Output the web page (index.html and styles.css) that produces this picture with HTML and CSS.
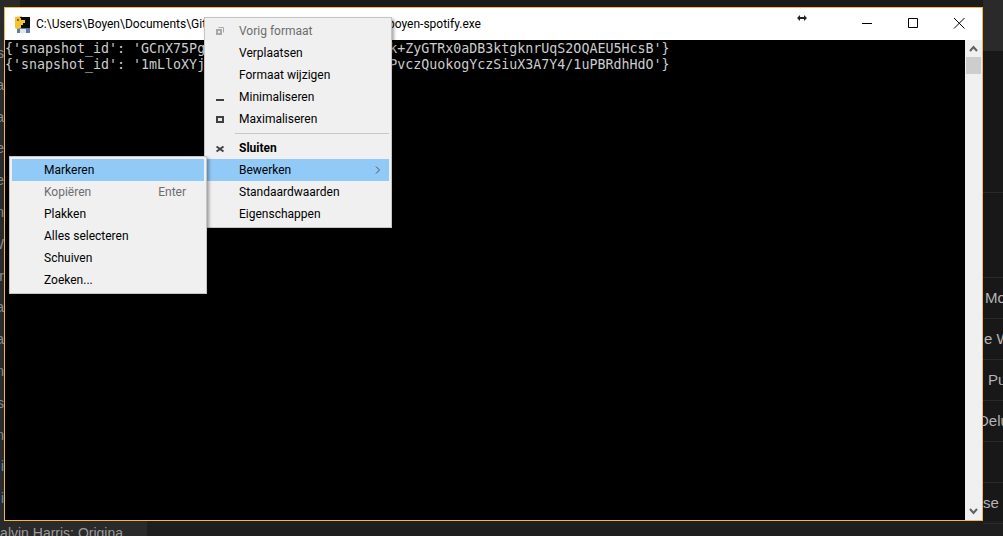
FILE: index.html
```html
<!DOCTYPE html>
<html lang="nl">
<head>
<meta charset="utf-8">
<title>boyen-spotify.exe</title>
<link rel="stylesheet" href="styles.css">
</head>
<body>
<div class="desktop">
  <div class="backdrop">
    <div class="left-list">
      <span class="cut">s</span>
      <span class="cut">a</span>
      <span class="cut">a</span>
      <span class="cut">e</span>
      <span class="cut">e</span>
      <span class="cut">n</span>
      <span class="cut">W</span>
      <span class="cut">r</span>
      <span class="cut">a</span>
      <span class="cut">a</span>
      <span class="cut">n</span>
      <span class="cut">ls</span>
      <span class="cut">n</span>
      <span class="cut blue">i</span>
      <span class="cut blue">i</span>
    </div>
    <div class="right-list">
      <div class="top-band"></div>
      <div class="row tall"></div>
      <div class="row double"></div>
      <div class="row"><span class="mo">Mo</span></div>
      <div class="row"><span class="we">e W</span></div>
      <div class="row"><span class="pu">Pu</span></div>
      <div class="row"><span class="de">Delu</span></div>
      <div class="row"></div>
      <div class="row"><span class="se">se</span></div>
    </div>
    <div class="bottom-band"><span class="now">Calvin Harris: Origina</span></div>
  </div>

  <section class="window">
    <header class="titlebar">
      <svg class="app-icon" width="15" height="17" viewBox="0 0 15 17">
        <path d="M2 12h13v5H2z" fill="#5f7da6"/>
        <path d="M5 13h6v4H5z" fill="#dfe6ef"/>
        <path d="M0 1l7-1v12l-5 1-2-1z" fill="#f4c430"/>
        <path d="M5 1h10v11H5z" fill="#0b0b0b"/>
        <path d="M1 2h5v10H1z" fill="#f4c430"/>
        <path d="M6 4h4v3H8v2H6z" fill="#f0c83c"/>
        <path d="M2 3h2v2H2z" fill="#8a6a14"/>
      </svg>
      <span class="title-left">C:\Users\Boyen\Documents\Git</span>
      <span class="title-right">boyen-spotify.exe</span>
      <span class="controls">
        <svg class="ctl" width="46" height="32" viewBox="0 0 46 32"><path d="M18 15.500h10" stroke="#000" fill="none"/></svg>
        <svg class="ctl" width="46" height="32" viewBox="0 0 46 32"><path d="M18.500 10.500h9v9h-9z" stroke="#000" fill="none"/></svg>
        <svg class="ctl" width="46" height="32" viewBox="0 0 46 32"><path d="M18 10l10.500 10.500M28.500 10L18 20.500" stroke="#000" fill="none"/></svg>
      </span>
    </header>
    <div class="body">
      <div class="console">
        <div class="line"><span>{'snapshot_id': 'GCnX75Pg</span><span class="tail">k+ZyGTRx0aDB3ktgknrUqS2OQAEU5HcsB'}</span></div>
        <div class="line"><span>{'snapshot_id': '1mLloXYj</span><span class="tail">PvczQuokogYczSiuX3A7Y4/1uPBRdhHdO'}</span></div>
      </div>
      <div class="scrollbar">
        <svg class="sb-arrow" width="17" height="17" viewBox="0 0 17 17"><path d="M5 11l3.500-4 3.500 4" stroke="#606060" stroke-width="2" fill="none"/></svg>
        <div class="thumb"></div>
        <svg class="sb-arrow down" width="17" height="17" viewBox="0 0 17 17"><path d="M5 6l3.500 4 3.500-4" stroke="#606060" stroke-width="2" fill="none"/></svg>
      </div>
    </div>
  </section>

  <svg class="cursor" width="10" height="6" viewBox="0 0 10 6"><path d="M0 3l3-3v2h4V0l3 3-3 3V4H3v2z" fill="#222"/></svg>

  <nav class="menu system">
    <div class="item off"><svg class="ico" width="9" height="9" viewBox="0 0 9 9"><path d="M2.500.5h5v5" stroke="#a8a8a8" fill="none"/><path d="M1 3h4v4H1z" stroke="#a8a8a8" stroke-width="2" fill="none"/></svg>Vorig formaat</div>
    <div class="item">Verplaatsen</div>
    <div class="item">Formaat wijzigen</div>
    <div class="item"><svg class="ico" width="9" height="9" viewBox="0 0 9 9"><path d="M0 6h8v2H0z" fill="#404040"/></svg>Minimaliseren</div>
    <div class="item"><svg class="ico" width="9" height="9" viewBox="0 0 9 9"><path d="M1 2h6v5H1z" fill="#e8e8e8" stroke="#404040" stroke-width="2"/></svg>Maximaliseren</div>
    <div class="sep"></div>
    <div class="item strong"><svg class="ico" width="9" height="9" viewBox="0 0 9 9"><path d="M.5 2.500l7 5M7.500 2.500l-7 5" stroke="#404040" stroke-width="2" fill="none"/></svg>Sluiten</div>
    <div class="item hot">Bewerken<svg class="chev" width="6" height="8" viewBox="0 0 6 8"><path d="M1 .5l3.500 3.500L1 7.500" stroke="#555" fill="none"/></svg></div>
    <div class="item">Standaardwaarden</div>
    <div class="item">Eigenschappen</div>
  </nav>

  <nav class="menu edit">
    <div class="item hot">Markeren</div>
    <div class="item off">Kopiëren<span class="key">Enter</span></div>
    <div class="item">Plakken</div>
    <div class="item">Alles selecteren</div>
    <div class="item">Schuiven</div>
    <div class="item">Zoeken...</div>
  </nav>
</div>
</body>
</html>
```
FILE: styles.css
```css
* { box-sizing: border-box; }
html, body { margin: 0; height: 100%; background: #1b1b1b; overflow: hidden; }

.desktop { position: relative; width: 1003px; height: 536px; overflow: hidden; font-family: Roboto, "Noto Sans", sans-serif; }

.backdrop { display: grid; grid-template-columns: 20px 1fr 20px; grid-template-rows: 521px 15px; height: 536px; font-family: "Liberation Sans", Arial, sans-serif; }

.left-list { grid-column: 1; grid-row: 1; background: #2a2a2a; padding-top: 44px; display: flex; flex-direction: column; gap: 0; }
.cut { display: block; height: 32px; line-height: 18px; width: 4px; font-size: 14px; color: #8a8a8a; white-space: nowrap; direction: rtl; }
.cut.blue { color: #5f8fb0; }

.right-list { grid-column: 3; grid-row: 1; background: #181818; display: flex; flex-direction: column; }
.top-band { height: 51px; background: #2a2a2a; flex: none; }
.row { height: 41px; flex: none; border-bottom: 1px solid #2a2a2a; position: relative; color: #b4b4b4; font-size: 15px; line-height: 40px; white-space: nowrap; }
.row.tall { height: 142px; }
.row.double { height: 85px; }
.mo { margin-left: 2px; }
.we { margin-left: 1px; }
.pu { margin-left: 5px; }
.de { margin-left: -5px; }
.se { margin-left: 0; }

.bottom-band { grid-column: 1 / -1; grid-row: 2; background: linear-gradient(90deg, #2a2a2a 147px, #1e1e1e 147px); overflow: hidden; color: #9a9a9a; font-size: 14px; line-height: 24px; white-space: nowrap; }
.now { margin-left: -10px; }

.window { position: absolute; left: 4px; top: 7px; width: 979px; height: 514px; border: 1px solid #f0b849; display: flex; flex-direction: column; background: #fff; }

.titlebar { height: 32px; flex: none; display: flex; align-items: center; background: #fff; font-size: 12px; color: #000; padding-left: 10px; white-space: nowrap; }
.app-icon { flex: none; margin-right: 6px; }
.title-left { width: 352px; flex: none; }
.controls { margin-left: auto; display: flex; padding-right: 0; }
.ctl { display: block; }

.body { flex: 1; display: flex; min-height: 0; }
.console { flex: 1; background: #000; color: #ccc; padding-top: 1px; font-family: "DejaVu Sans Mono", "Liberation Mono", monospace; font-size: 13.3px; line-height: 16px; overflow: hidden; }
.line { white-space: pre; }
.tail { margin-left: 23ch; }
.scrollbar { width: 17px; flex: none; background: #f0f0f0; display: flex; flex-direction: column; align-items: center; }
.sb-arrow { flex: none; }
.sb-arrow.down { margin-top: auto; }
.thumb { width: 15px; height: 17px; background: #cdcdcd; }

.cursor { position: absolute; left: 797px; top: 15px; }

.menu { position: absolute; background: #f0f0f0; border: 1px solid #c4c4c4; padding: 2px; font-size: 12px; color: #000; box-shadow: 2px 2px 3px rgba(0,0,0,.35); }
.system { left: 204px; top: 17px; width: 188px; height: 211px; }
.edit { left: 9px; top: 156px; width: 198px; height: 138px; }

.item { position: relative; height: 22px; line-height: 22px; padding-left: 32px; white-space: nowrap; }
.item.off { color: #6d6d6d; }
.item.strong { font-weight: 700; }
.item.hot { background: #91c9f7; }
.ico { position: absolute; left: 9px; top: 7px; }
.chev { position: absolute; right: 8px; top: 7px; }
.key { position: absolute; right: 18px; top: 0; }
.sep { height: 1px; background: #c8c8c8; margin: 3px 0 3px 28px; }
```
